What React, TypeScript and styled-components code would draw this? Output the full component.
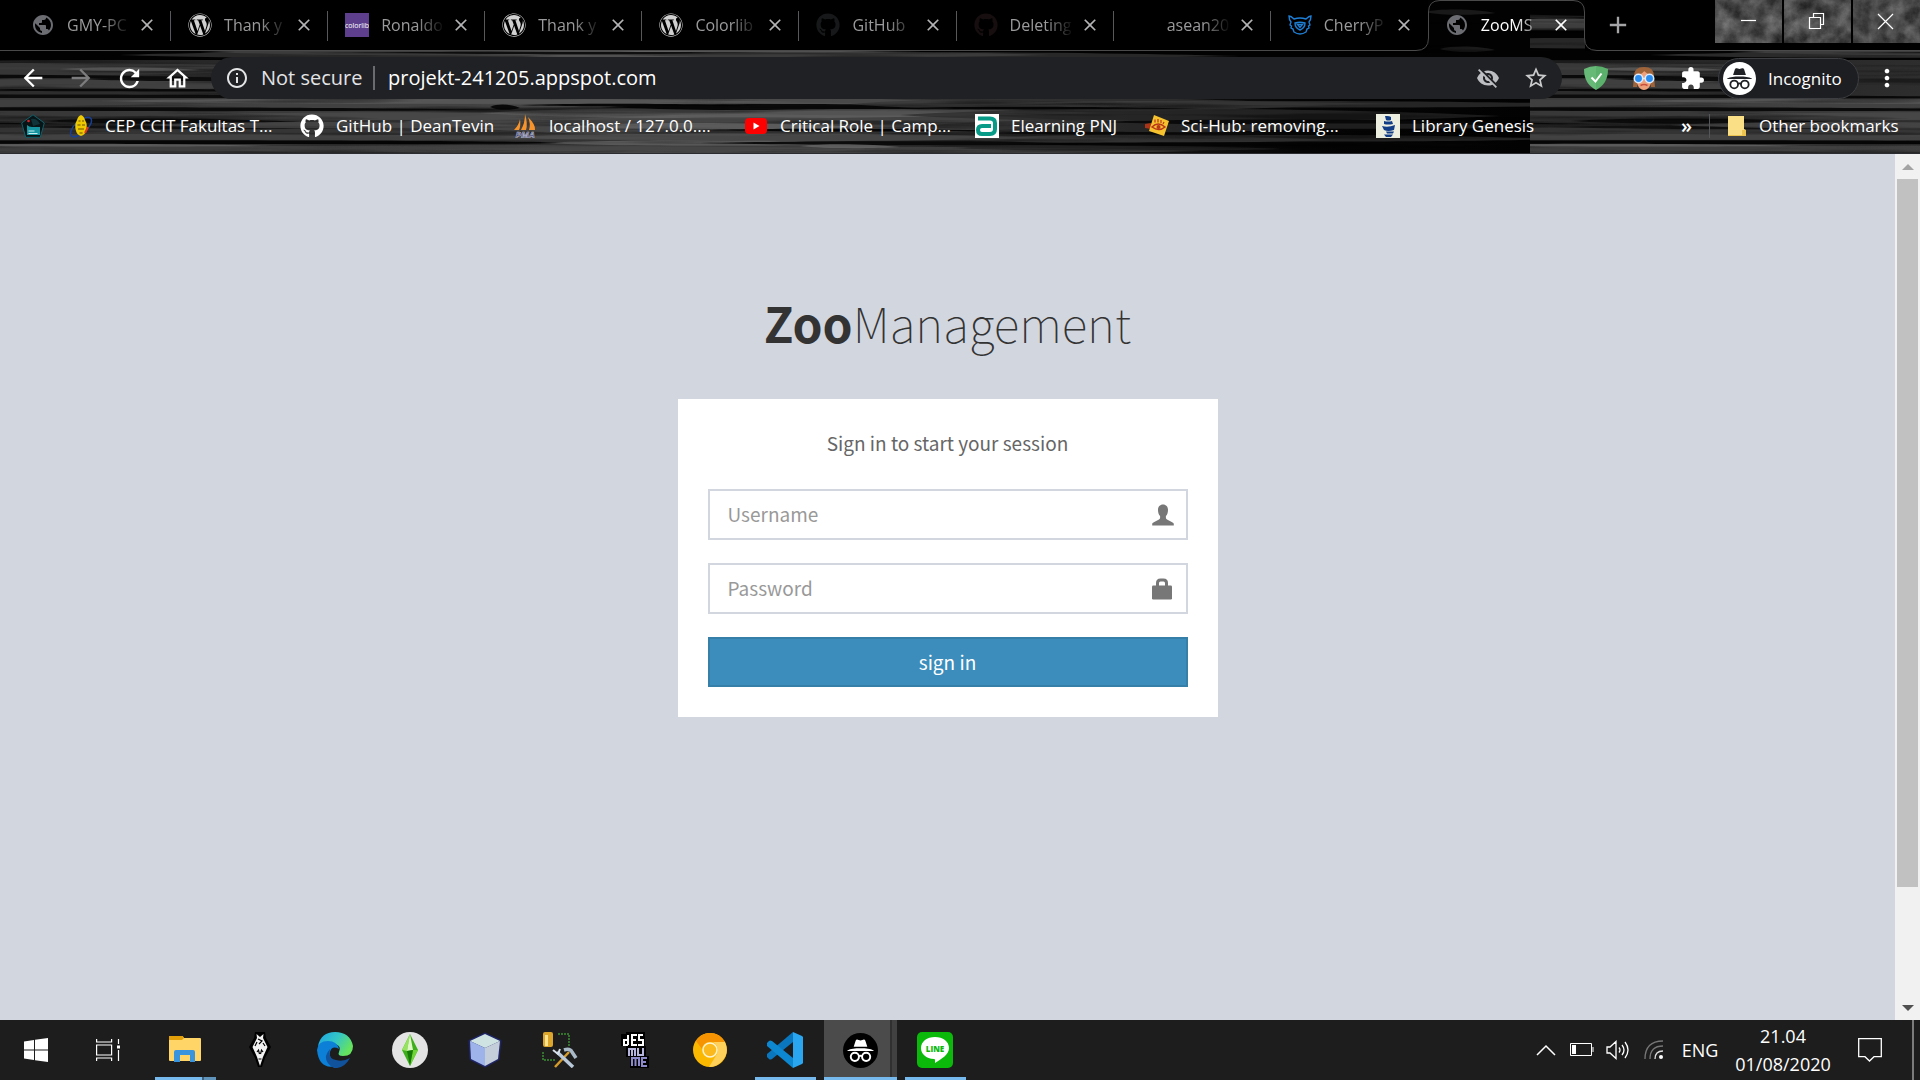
import React from "react";
import styled, { createGlobalStyle } from "styled-components";
import {
  MdArrowBack,
  MdArrowForward,
  MdRefresh,
  MdOutlineHome,
  MdInfoOutline,
  MdStarBorder,
  MdExtension,
  MdMoreVert,
  MdPublic,
  MdVisibilityOff,
  MdClose,
  MdAdd,
} from "react-icons/md";
import { FaWordpress, FaGithub } from "react-icons/fa";

const GlobalStyle = createGlobalStyle`
  *, *::before, *::after { box-sizing: border-box; }
  body { margin: 0; background: #000; font-family: "Open Sans", "Noto Sans", sans-serif; }
  button, input { font: inherit; color: inherit; }
  svg { display: block; flex: none; }
`;

/* ---------- shell ---------- */

const Screen = styled.div`
  display: flex;
  flex-direction: column;
  height: 100vh;
  overflow: hidden;
`;

const Chrome = styled.header`
  position: relative;
  isolation: isolate;
  flex: none;
  background: #000;
  border-bottom: 1px solid #2b2c2f;
`;

const TextureSvg = styled.svg`
  position: absolute;
  inset: 0;
  width: 100%;
  height: 100%;
  z-index: -1;
`;

/* ---------- tab strip ---------- */

const Strip = styled.div`
  display: flex;
  height: 51px;
`;

const TabList = styled.div`
  display: flex;
  flex: 1;
  min-width: 0;
`;

const StripEdge = styled.div`
  flex: none;
  width: 14px;
  background: #000;
  border-bottom: 1px solid #4a4a4a;
`;

const TabItem = styled.div<{ $active?: boolean; $divider?: boolean }>`
  position: relative;
  display: flex;
  align-items: center;
  flex: 1 1 0;
  min-width: 0;
  padding: 0 14px 0 17px;
  background: ${(p) => (p.$active ? "transparent" : "#000")};
  border-bottom: 1px solid ${(p) => (p.$active ? "transparent" : "#4a4a4a")};
  color: ${(p) => (p.$active ? "#fff" : "#9a9a9c")};
  z-index: ${(p) => (p.$active ? 1 : 0)};

  &::after {
    content: "";
    display: ${(p) => (p.$divider ? "block" : "none")};
    position: absolute;
    right: 0;
    top: 11px;
    width: 1px;
    height: 30px;
    background: #58585a;
  }
`;

const TabOutline = styled.svg`
  position: absolute;
  left: -12px;
  top: 0;
`;

const TabButton = styled.button`
  position: relative;
  display: flex;
  align-items: center;
  gap: 12px;
  flex: 1;
  min-width: 0;
  height: 40px;
  padding: 0;
  border: 0;
  background: none;
  text-align: left;
`;

const TabTitle = styled.span`
  flex: 0 0 66px;
  overflow: hidden;
  font-size: 16px;
  line-height: 24px;
  white-space: nowrap;
  mask-image: linear-gradient(90deg, #000 36px, transparent 64px);
`;

const IconButton = styled.button<{ $size?: number; $tone?: string }>`
  position: relative;
  display: grid;
  place-items: center;
  flex: none;
  width: ${(p) => p.$size ?? 48}px;
  height: ${(p) => p.$size ?? 48}px;
  padding: 0;
  border: 0;
  background: none;
  color: ${(p) => p.$tone ?? "#fff"};
`;

const StripEnd = styled.div`
  display: flex;
  justify-content: space-between;
  align-items: flex-start;
  flex: none;
  width: 335px;
  padding-left: 16px;
  background: #000;
  border-bottom: 1px solid #4a4a4a;
`;

const NewTab = styled.div`
  display: flex;
  align-items: center;
  height: 50px;
`;

const WindowControls = styled.div`
  display: flex;
  gap: 2px;
`;

const WindowButton = styled.button`
  position: relative;
  width: 67px;
  height: 43px;
  padding: 0;
  border: 0;
  background: #3c3c3c;
`;

/* ---------- toolbar ---------- */

const Toolbar = styled.div`
  display: flex;
  align-items: center;
  height: 54px;
  padding: 0 9px;
`;

const Omnibox = styled.div`
  display: flex;
  align-items: center;
  flex: 1;
  min-width: 0;
  height: 42px;
  margin: 0 10px;
  padding: 0 2px 0 14px;
  border-radius: 21px;
  background: #202124;
`;

const SiteInfo = styled.button`
  display: flex;
  align-items: center;
  gap: 12px;
  flex: none;
  width: 150px;
  padding: 0;
  border: 0;
  border-right: 2px solid #6a6b6e;
  background: none;
  color: #e3e4e6;
  font-size: 20px;
  line-height: 24px;
  white-space: nowrap;
`;

const UrlInput = styled.input`
  flex: 1;
  min-width: 0;
  padding: 0 0 0 13px;
  border: 0;
  outline: 0;
  background: none;
  color: #fff;
  font-size: 20px;
  line-height: 28px;
`;

const ProfileChip = styled.button`
  display: flex;
  align-items: center;
  gap: 12px;
  flex: none;
  width: 141px;
  height: 41px;
  margin: 0 4px 0 2px;
  padding: 0 0 0 4px;
  border: 1px solid #3d3e41;
  border-radius: 21px;
  background: #1d1e21;
  color: #fff;
  font-size: 17px;
`;

/* ---------- bookmarks ---------- */

const Bookmarks = styled.nav`
  display: flex;
  align-items: center;
  gap: 24px;
  height: 48px;
  padding: 0 21px;
  padding-bottom: 6px;
`;

const BookmarkLink = styled.a<{ $label?: number }>`
  display: flex;
  align-items: center;
  gap: 12px;
  flex: none;
  color: #fff;
  font-size: 17px;
  line-height: 24px;
  text-decoration: none;
  white-space: nowrap;

  span {
    width: ${(p) => (p.$label ? `${p.$label}px` : "auto")};
  }
`;

const BookmarkEnd = styled.div`
  display: flex;
  align-items: center;
  margin-left: auto;
  gap: 17px;
`;

const More = styled.button`
  padding: 0;
  border: 0;
  background: none;
  color: #fff;
  font-size: 20px;
  font-weight: 600;
  line-height: 24px;
`;

const Rule = styled.i`
  width: 1px;
  height: 24px;
  background: #55565a;
`;

/* ---------- page ---------- */

const Viewport = styled.div`
  display: flex;
  flex: 1;
  min-height: 0;
`;

const Page = styled.main`
  flex: 1;
  min-width: 0;
  padding-top: 132px;
  background: #d2d6de;
  font-family: "Noto Sans CJK SC", "Open Sans", sans-serif;
`;

const LoginBox = styled.section`
  width: 540px;
  margin: 0 auto;
`;

const Logo = styled.h1`
  margin: 0 0 41px;
  color: #333;
  font-size: 48px;
  font-weight: 100;
  line-height: 72px;
  text-align: center;
  white-space: nowrap;

  b { font-weight: 700; }
`;

const Card = styled.form`
  display: flex;
  flex-direction: column;
  padding: 30px;
  background: #fff;
  color: #666;
  font-size: 19px;
`;

const Message = styled.p`
  margin: 0 0 32px;
  line-height: 28px;
  text-align: center;
`;

const Field = styled.label`
  display: flex;
  align-items: center;
  height: 51px;
  margin-bottom: 23px;
  padding: 0 12px 0 18px;
  border: 2px solid #d2d6de;
  color: #777;
`;

const FieldInput = styled.input`
  flex: 1;
  min-width: 0;
  padding: 0 0 2px;
  border: 0;
  outline: 0;
  background: none;
  color: #555;
  line-height: 28px;

  &::placeholder { color: #999; opacity: 1; }
`;

const Submit = styled.button`
  height: 50px;
  padding: 0 0 2px;
  border: 2px solid #367fa9;
  background: #3c8dbc;
  color: #fff;
`;

const ScrollTrack = styled.div`
  display: flex;
  flex-direction: column;
  align-items: center;
  flex: none;
  width: 25px;
  background: #f1f1f1;
`;

const ScrollArrow = styled.button<{ $down?: boolean }>`
  display: grid;
  place-items: center;
  width: 25px;
  height: 25px;
  padding: 0;
  border: 0;
  background: none;

  &::before {
    content: "";
    border: 6px solid transparent;
    border-top: ${(p) => (p.$down ? "6px solid #505050" : "0")};
    border-bottom: ${(p) => (p.$down ? "0" : "6px solid #a3a3a3")};
  }
`;

const ScrollRail = styled.div`
  flex: 1;
  width: 21px;
`;

const ScrollThumb = styled.div`
  height: calc(87% - 2px);
  background: #c1c1c1;
`;

/* ---------- taskbar ---------- */

const Taskbar = styled.footer`
  display: flex;
  flex: none;
  height: 60px;
  background: #1d1d1d;
  color: #fff;
`;

const SystemButton = styled.button`
  display: grid;
  place-items: center;
  width: 72px;
  padding: 0;
  border: 0;
  background: none;
`;

const Apps = styled.div`
  display: flex;
  gap: 14px;
  margin-left: 11px;
`;

const AppButton = styled.button<{ $open?: boolean; $active?: boolean; $stacked?: boolean }>`
  position: relative;
  display: grid;
  place-items: center;
  width: ${(p) => (p.$active ? 73 : 61)}px;
  margin: ${(p) => (p.$active ? "0 -6px" : "0")};
  padding: 0 1px 0 0;
  border: 0;
  background: ${(p) =>
    p.$active ? "linear-gradient(90deg, #4b4b4b 66px, #303030 66px, #303030 68px, #414141 68px)" : "none"};

  &::before {
    content: "";
    display: ${(p) => (p.$open ? "block" : "none")};
    position: absolute;
    left: 0;
    right: 0;
    bottom: 0;
    height: 3px;
    background: ${(p) =>
      p.$stacked
        ? "linear-gradient(90deg, #76b9ed calc(100% - 14px), #3f617c calc(100% - 14px), #3f617c calc(100% - 12px), #6094bb calc(100% - 12px))"
        : "#76b9ed"};
  }
`;

const Tray = styled.div`
  display: flex;
  align-items: center;
  margin-left: auto;
  font-size: 18px;
  line-height: 28px;
`;

const TrayButton = styled.button<{ $w: number }>`
  display: grid;
  place-items: center;
  flex: none;
  width: ${(p) => p.$w}px;
  height: 60px;
  padding: 0;
  border: 0;
  background: none;
  line-height: 28px;
  text-align: center;
`;

const Clock = styled.button`
  width: 110px;
  height: 60px;
  padding: 2px 0;
  border: 0;
  background: none;
  line-height: 28px;

  time { display: block; }
`;

const ShowDesktop = styled.button`
  width: 8px;
  height: 60px;
  margin-left: 10px;
  padding: 0;
  border: 0;
  border-left: 2px solid #7b7b7b;
  background: none;
`;

/* ---------- theme texture ---------- */

// [x start, x end, y, half thickness, grey level]
const streaks: number[][] = [
  [-200, 90, 16, 3, 40], [-120, 200, 23, 7, 88], [-120, 200, 27, 5, 60], [-100, 200, 43, 8, 50],
  [1425, 1495, 12, 4, 26], [1440, 1495, 49, 4, 28],
  [-400, 300, 55, 8, 2],
  [200, 760, 52, 5, 80], [420, 1050, 54, 6, 105], [300, 900, 53, 2, 10], [620, 1240, 55, 5, 52], [120, 560, 55, 4, 55],
  [-300, 320, 66, 5, 62], [-100, 230, 71, 6, 60], [60, 200, 69, 3, 90], [-300, 240, 77, 4, 8], [-200, 330, 84, 9, 72],
  [80, 300, 79, 3, 12], [-150, 260, 91, 6, 48], [-60, 330, 90, 2, 8], [-300, 500, 97, 4, 10],
  [-500, 900, 103, 8, 72], [100, 800, 101, 4, 92], [400, 1100, 102, 6, 84],
  [-400, 700, 115, 8, 62], [-200, 520, 109, 3, 8], [-100, 420, 119, 4, 50], [150, 760, 116, 6, 74],
  [400, 1100, 122, 20, 74], [480, 1000, 113, 8, 98], [640, 900, 119, 3, 66], [600, 1040, 107, 5, 6], [520, 760, 105, 2, 4], [490, 520, 107, 4, 6],
  [700, 1100, 112, 5, 80], [560, 860, 126, 5, 98], [700, 1010, 130, 2, 6],
  [-300, 60, 123, 2, 6], [40, 300, 121, 4, 12], [-200, 500, 133, 9, 56], [20, 420, 127, 3, 16], [140, 540, 125, 5, 74],
  [-400, 700, 137, 5, 70], [-200, 650, 142, 3, 4], [-300, 900, 149, 8, 70], [-60, 270, 145, 2, 100],
  [500, 1050, 137, 6, 78], [540, 900, 143, 4, 100], [700, 1200, 143, 3, 8], [420, 1200, 150, 6, 70], [800, 900, 146, 3, 105],
  [850, 1330, 104, 10, 54], [900, 1200, 108, 2, 4], [1000, 1400, 103, 3, 70], [900, 1500, 115, 10, 42], [1050, 1620, 104, 5, 48],
  [920, 1330, 126, 10, 44], [1100, 1500, 122, 4, 8], [1180, 1560, 126, 4, 38], [950, 1330, 139, 6, 58], [1100, 1560, 138, 5, 44],
  [950, 1280, 148, 4, 36], [1000, 1500, 144, 3, 4], [980, 1250, 133, 2, 8],
];

const Texture = () => (
  <TextureSvg aria-hidden="true">
    <defs>
      <linearGradient id="shade">
        <stop offset="0" stopColor="#222" />
        <stop offset="0.400" stopColor="#343434" />
        <stop offset="0.650" stopColor="#222" />
        <stop offset="0.850" stopColor="#050505" />
        <stop offset="1" stopColor="#020202" />
      </linearGradient>
      <filter id="grain" x="0" y="0" width="100%" height="100%">
        <feTurbulence type="fractalNoise" baseFrequency="0.004 0.14" numOctaves="3" seed="8" />
        <feColorMatrix values="0 0 0 0 0  0 0 0 0 0  0 0 0 0 0  4 0 0 0 -2" />
      </filter>
      <pattern id="wood" width="1530" height="160" patternUnits="userSpaceOnUse">
        <rect width="1530" height="160" fill="#020202" />
        <rect y="60" width="1530" height="100" fill="url(#shade)" />
        {streaks.map(([a, b, y, h, g], i) => {
          const third = (b - a) / 4;
          return (
            <path
              key={i}
              fill={`rgb(${g},${g},${g})`}
              fillOpacity={g < 30 ? 0.95 : 0.75}
              d={`M${a} ${y}C${a + third} ${y - h} ${b - third} ${y - h * 0.7} ${b} ${y + 1}C${b - third} ${y + h * 0.8} ${a + third} ${y + h} ${a} ${y}z`}
            />
          );
        })}
        <rect width="1530" height="160" filter="url(#grain)" opacity="0.4" />
      </pattern>
    </defs>
    <rect width="100%" height="100%" fill="url(#wood)" />
  </TextureSvg>
);

const ButtonGrain = ({ seed, children }: { seed: number; children: React.ReactNode }) => (
  <svg width="67" height="43" aria-hidden="true">
    <filter id={`stone${seed}`} x="0" y="0" width="100%" height="100%" colorInterpolationFilters="sRGB">
      <feTurbulence type="fractalNoise" baseFrequency="0.06" numOctaves="6" seed={seed} />
      <feColorMatrix values="0.45 0 0 0 0.06  0.45 0 0 0 0.06  0.45 0 0 0 0.06  0 0 0 0 1" />
    </filter>
    <rect width="67" height="43" filter={`url(#stone${seed})`} />
    <g fill="none" stroke="#fff" strokeWidth="1.2">{children}</g>
  </svg>
);

/* ---------- drawn icons ---------- */

const IncognitoGlyph = ({ size, disc, ink }: { size: number; disc: string; ink: string }) => (
  <svg width={size} height={size} viewBox="0 0 36 36" aria-hidden="true">
    <circle cx="18" cy="18" r="18" fill={disc} />
    <path fill={ink} d="M13 8c.4-1.200 1.200-1.500 2.200-1.100l2.800.8 2.800-.8c1-.4 1.800-.1 2.200 1.100l2 6.200H11zM4.500 18.600v-.7C8 16.200 12 15.700 18 15.700s10 .5 13.500 2.200v.7z" />
    <g fill="none" stroke={ink} strokeWidth="2">
      <circle cx="12.200" cy="24.500" r="4.200" />
      <circle cx="23.800" cy="24.500" r="4.200" />
      <path d="M16.300 24q1.700-1.300 3.400 0" />
    </g>
  </svg>
);

const Wp = () => <FaWordpress size={24} color="#d0d0d0" />;
const Globe = () => <MdPublic size={24} color="#6b6d72" />;

const Colorlib = () => (
  <svg width="24" height="24" aria-hidden="true">
    <rect width="24" height="24" fill="#5e3f8e" />
    <text x="12" y="15" textAnchor="middle" fontSize="7" fontFamily="Open Sans, sans-serif" fill="#fff">colorlib</text>
  </svg>
);

const YouTube = () => (
  <svg width="24" height="24" viewBox="0 0 24 24" aria-hidden="true">
    <rect x="1" y="4" width="22" height="16" rx="4" fill="#f00" />
    <path d="M9.500 8.500v7l6-3.500z" fill="#fff" />
  </svg>
);

const Cherry = () => (
  <svg width="24" height="24" viewBox="0 0 24 24" fill="none" stroke="#1d7fd6" strokeWidth="1.400" aria-hidden="true">
    <path d="M1 3q2 0 5 3 6-2 12 0 3-3 5-3 0 4-2 6l1 3-1.500 1 .5 2-2 1-1 3q-6 4-12 0l-1-3-2-1 .5-2L2 12l1-3Q1 7 1 3z" />
    <path d="M7 10q5-1.500 10 0 0 5-5 7-5-2-5-7zM9.500 11.500h5L12 14.500z" />
  </svg>
);

const Blank = styled.i`
  width: 24px;
  height: 24px;
`;

const Pentagon = () => (
  <svg width="24" height="24" viewBox="0 0 24 24" aria-hidden="true">
    <path d="M12 .8L23.300 9l-4 14.300H4.700L.7 9z" fill="#081416" stroke="#12606a" />
    <path d="M6 11q2 2 5 2h8v8H6z" fill="#1795a0" />
    <path d="M10 5q6-1 9 5l-7 2z" fill="#0f3338" />
    <circle cx="7.500" cy="7" r="1.300" fill="#d8222b" />
    <path d="M7.500 17h6M7.500 19.500h9" stroke="#c7eef0" />
  </svg>
);

const Ccit = () => (
  <svg width="24" height="24" viewBox="0 0 24 24" aria-hidden="true">
    <ellipse cx="12" cy="13" rx="13" ry="6" fill="none" stroke="#173f96" strokeWidth="1.500" transform="rotate(-42 12 13)" />
    <path d="M12 1q3 1 4 5 3 5 1 11-1 4-5 5-4-1-5-5-2-6 1-11 1-4 4-5z" fill="#ecc900" />
    <path d="M9.500 7h2M13 7h2M8.500 11h3M13 11h3M9 15h6M10.500 19h3" stroke="#6a4d00" strokeWidth="1.200" />
    <path d="M19 13l-3 6" stroke="#e0381c" strokeWidth="2" />
  </svg>
);

const Pma = () => (
  <svg width="24" height="24" viewBox="0 0 24 24" aria-hidden="true">
    <path d="M7 5q1 7-1 11H1q5-5 6-11zM12 0q3 10 1 16H8q4-7 4-16zM15 3q8 8 7 13h-6q2-6-1-13z" fill="#f6932a" />
    <text x="12" y="24" textAnchor="middle" fontSize="9" fontWeight="700" fontStyle="italic" fontFamily="Open Sans, sans-serif" fill="#3b3d74" stroke="#c9c9d8" strokeWidth="0.500">PMA</text>
  </svg>
);

const Elearning = () => (
  <svg width="24" height="24" viewBox="0 0 24 24" aria-hidden="true">
    <rect width="24" height="24" fill="#fff" />
    <path d="M3 4.500h12q5 0 5 4.500v6q0 5-5 5H7q-4 0-4-4t4-4h9" fill="none" stroke="#079a87" strokeWidth="4" />
  </svg>
);

const SciHub = () => (
  <svg width="24" height="24" viewBox="0 0 24 24" aria-hidden="true">
    <path d="M0 10l6-1v6l-6-1z" fill="#a9341a" />
    <path d="M9 1l15 6-5 15-15-5z" fill="#f6c22d" />
    <path d="M7 13q6-6 13 0-6 5-13 0z" fill="none" stroke="#b8361b" strokeWidth="1.500" />
    <circle cx="13.500" cy="13" r="2" fill="#b8361b" />
    <path d="M10 5.500v3M13 5v3.500M16 6v3M19 8l-1 2" stroke="#b8361b" strokeWidth="1.200" />
  </svg>
);

const LibGen = () => (
  <svg width="24" height="24" viewBox="0 0 24 24" aria-hidden="true">
    <rect width="24" height="24" fill="#eceee0" />
    <path d="M9 2q4-.5 6 1v3q-3 1-5 0zM8 7q4 1 8 0l1 3q-5 1-9 0zM6 12q6 2 13-1l-1 5q-6 2-10 0zM10 17.500h8l-1 2h-6zM8 20.500h9l-2 2.500H10z" fill="#113c86" />
  </svg>
);

const FolderGlyph = () => (
  <svg width="20" height="24" viewBox="0 0 20 24" aria-hidden="true">
    <path d="M1 2h16v13l2 1v6H1z" fill="#fbdf87" />
    <path d="M1 21h14v-5h4v6H1z" fill="#eec450" />
  </svg>
);

const Shield = () => (
  <svg width="24" height="24" viewBox="0 0 24 24" aria-hidden="true">
    <path d="M12 0q6 0 12 3 0 15-12 21z" fill="#5bb06c" />
    <path d="M12 0Q6 0 0 3q0 15 12 21z" fill="#67b978" />
    <path d="M7.500 11.500l4 4 6-8" fill="none" stroke="#fff" strokeWidth="2" />
  </svg>
);

const Goggles = () => (
  <svg width="24" height="24" viewBox="0 0 24 24" aria-hidden="true">
    <path d="M2 10Q2 1 12 1t10 9l1 11h-4L17 8H7L5 21H1z" fill="#a0643a" />
    <path d="M5 9q4 0 7-4 3 3 7 4v8q-2 7-7 7t-7-7z" fill="#eda07a" />
    <path d="M4 9q5 0 9-5l-5-2-5 4z" fill="#a0643a" />
    <path d="M8.500 19.500q3.500-2 7 0" fill="none" stroke="#c84f3c" strokeWidth="1.500" />
    <g fill="#2b8cf0" stroke="#dcecff" strokeWidth="1.500">
      <circle cx="6.500" cy="12.500" r="4.200" />
      <circle cx="17.500" cy="12.500" r="4.200" />
    </g>
    <path d="M10.500 12.500h3" stroke="#dcecff" strokeWidth="1.500" />
  </svg>
);

const UserGlyph = () => (
  <svg width="22" height="22" viewBox="0 0 22 21" fill="currentColor" aria-hidden="true">
    <path d="M11 0c3.200 0 5 2.300 5 5.600 0 2.600-.7 4.700-2.100 6v1.700c0 .8.4 1.200 1.100 1.600l5.200 2.800c1 .5 1.600 1 1.600 2V21H.2v-1.300c0-1 .6-1.500 1.600-2L7 14.900c.7-.4 1.100-.8 1.100-1.600v-1.700C6.700 10.300 6 8.200 6 5.600 6 2.300 7.800 0 11 0z" />
  </svg>
);

const LockGlyph = () => (
  <svg width="22" height="22" viewBox="0 0 22 21" aria-hidden="true">
    <rect x="0" y="7" width="20" height="14" rx="1.200" fill="currentColor" />
    <path d="M5.500 8V4.500q0-3 3-3h3q3 0 3 3V8" fill="none" stroke="currentColor" strokeWidth="3" />
  </svg>
);

const WindowsLogo = () => (
  <svg width="24" height="24" viewBox="0 0 24 24" fill="#fff" aria-hidden="true">
    <path d="M0 3.400L10 2v9.500H0zM11 1.800L24 0v11.500H11zM0 12.500h10V22L0 20.600zM11 12.500h13V24l-13-1.800z" />
  </svg>
);

const TaskView = () => (
  <svg width="24" height="24" viewBox="0 0 24 24" fill="none" stroke="#fff" strokeWidth="1.200" aria-hidden="true">
    <path d="M.6 1v3h15V1M.6 7h15v10H.6zM.6 23v-3h15v3M22.500 1v5M22.500 12v11" />
    <rect x="21" y="7.500" width="3" height="3" fill="#fff" stroke="none" />
  </svg>
);

const Explorer = () => (
  <svg width="32" height="28" viewBox="0 0 32 28" aria-hidden="true">
    <path d="M0 1q0-1 1-1h12q1 0 2 2h16q1 0 1 1v21q0 1-1 1H1q-1 0-1-1z" fill="#ffd567" />
    <path d="M0 1q0-1 1-1h12q1 0 2 2l-2 2H0z" fill="#e3a008" />
    <path d="M5 26V16q0-2 2-2h17q2 0 2 2v10h-5v-7H11v7z" fill="#3a93dd" />
  </svg>
);

const Skyrim = () => (
  <svg width="22" height="36" viewBox="0 0 22 36" aria-hidden="true">
    <path d="M6 0h10l1 6 5 9-6 11-3 9h-4l-3-9L0 15l5-9z" fill="#000" />
    <path d="M7.500 2L8 6l-4.500 9L8 25l3 9 3-9 4.500-10L14 6l.5-4-3.500 3z" fill="#f2f2f2" />
    <path d="M9 7l4 2-3 3M8 10l-2 4M14 11l2 3M8 20l1.500-2 1 4M14 20l-1.500-2-1 4M9.500 27h3" fill="none" stroke="#000" strokeWidth="1.200" />
  </svg>
);

const Edge = () => (
  <svg width="36" height="36" viewBox="0 0 36 36" aria-hidden="true">
    <defs>
      <linearGradient id="edgeTop" x1="0" x2="1" y1="0" y2="0.500">
        <stop offset="0" stopColor="#1aa3e6" />
        <stop offset="0.550" stopColor="#35c6c4" />
        <stop offset="1" stopColor="#66e35e" />
      </linearGradient>
    </defs>
    <path d="M1 14Q4 0 18 0q15 0 18 14 0 10-10 10-6 0-4-4 3-6-4-8Q8 9 1 14z" fill="url(#edgeTop)" />
    <path d="M0 18q1-9 11-9 9 0 11 8-7-4-9 3-1 8 6 14Q2 38 0 18z" fill="#0c7fd6" />
    <path d="M13 17q-2 10 6 11 7 2 14-2-6 11-16 10-9-5-8-12 1-4 4-7z" fill="#11529d" />
  </svg>
);

const Sims = () => (
  <svg width="36" height="36" viewBox="0 0 36 36" aria-hidden="true">
    <circle cx="18" cy="18" r="18" fill="#e4e4e4" />
    <path d="M18 2l-8 16 8 16 8-16z" fill="#3fae1c" />
    <path d="M18 2l-3 17-5-1z" fill="#96e35d" />
    <path d="M18 2l3 16-6 1z" fill="#dff7c6" />
    <path d="M18 34l3-16 5 0z" fill="#71d436" />
    <path d="M18 34l-3-15 6-1z" fill="#177a08" />
  </svg>
);

const Cube = () => (
  <svg width="34" height="36" viewBox="0 0 34 36" aria-hidden="true">
    <path d="M17 2l15 7-2 18-13 7L3 27 2 9z" fill="#1f2566" stroke="#1f2566" strokeWidth="3" strokeLinejoin="round" />
    <path d="M17 2l15 7-15 7L2 9z" fill="#cfe3e2" />
    <path d="M2 9l15 7v18L3 27z" fill="#9db3ea" />
    <path d="M32 9l-15 7v18l13-7z" fill="#c3ceda" />
  </svg>
);

const DbTools = () => (
  <svg width="36" height="36" viewBox="0 0 36 36" fill="none" aria-hidden="true">
    <path d="M16 2h11v12M1 20v8h12" stroke="#3c8d36" strokeWidth="1.500" strokeDasharray="2 1" />
    <rect x="1" y="0" width="10" height="15" rx="2" fill="#dca52b" />
    <rect x="3" y="3" width="3" height="11" fill="#ffe28c" />
    <path d="M13 35l14-15" stroke="#d59b2b" strokeWidth="2.500" />
    <path d="M22 18q6-2 8 2l4 6" stroke="#a9b9c8" strokeWidth="3.500" />
    <path d="M15 20l16 15" stroke="#b9c9da" strokeWidth="3.500" />
    <path d="M11 18l5 4 2-5" stroke="#d5e0ea" strokeWidth="2" />
  </svg>
);

const Desmume = () => (
  <svg width="28" height="36" viewBox="0 0 28 36" aria-hidden="true">
    <path d="M0 2h5V0h19v14h1v10h3v12H9V25H5V14H0z" fill="#000" />
    <g fill="none" strokeWidth="2">
      <path stroke="#fff" d="M7 3v10M7 8H3v5h4M16 3h-5v10h5M11 8h4M22 3h-4v5h4v5h-5" />
      <path stroke="#b5b4dc" d="M8 24v-7h6v7M11 17v7M17 16v7h5v-7" />
      <path stroke="#8b89c9" d="M11 34v-8h7v8M14.500 26v8M26 26h-5v8h5M21 30h4" />
    </g>
  </svg>
);

const Canary = () => (
  <svg width="34" height="34" viewBox="0 0 34 34" aria-hidden="true">
    <circle cx="17" cy="17" r="17" fill="#fbb800" />
    <path d="M3 8Q8 0 17 0q10 0 15 9H17q-7 0-8 7z" fill="#f59303" />
    <path d="M32 9q5 12-4 20-5 5-12 5l8-13q3-7-4-12z" fill="#ffd05a" />
    <circle cx="17" cy="17" r="7" fill="#fbb91e" stroke="#fff3d0" strokeWidth="1.500" />
  </svg>
);

const VsCode = () => (
  <svg width="36" height="36" viewBox="0 0 36 36" aria-hidden="true">
    <path d="M26 0v10L5 27q-2 1-3 0l-2-2q-1-1 0-3z" fill="#0a76bd" />
    <path d="M26 36V26L5 9Q3 8 2 9l-2 2q-1 1 0 3z" fill="#0d87cf" />
    <path d="M26 0l9 4 1 1v26l-1 1-9 4z" fill="#2aa5ef" />
  </svg>
);

const Line = () => (
  <svg width="36" height="36" viewBox="0 0 36 36" aria-hidden="true">
    <rect width="36" height="36" rx="5" fill="#0ab90a" />
    <path d="M18 5c8 0 14 4.500 14 11 0 7-8 11-14 15 0-2 .5-4-1-4C9 26.500 4 22 4 16 4 9.500 10 5 18 5z" fill="#fff" />
    <text x="18" y="19.500" textAnchor="middle" fontSize="8" fontWeight="800" fontFamily="Open Sans, sans-serif" fill="#0ab90a">LINE</text>
  </svg>
);

/* ---------- data ---------- */

const tabs = [
  { title: "GMY-PC", icon: <Globe /> },
  { title: "Thank y", icon: <Wp /> },
  { title: "Ronaldo", icon: <Colorlib /> },
  { title: "Thank y", icon: <Wp /> },
  { title: "Colorlib", icon: <Wp /> },
  { title: "GitHub", icon: <FaGithub size={24} color="#17181a" /> },
  { title: "Deleting", icon: <FaGithub size={24} color="#170e0f" /> },
  { title: "asean20", icon: <Blank /> },
  { title: "CherryP", icon: <Cherry /> },
  { title: "ZooMS", icon: <Globe />, active: true },
];

const bookmarks = [
  { label: "CEP CCIT Fakultas T...", width: 171, icon: <Ccit /> },
  { label: "GitHub | DeanTevin", width: 153, icon: <FaGithub size={24} /> },
  { label: "localhost / 127.0.0....", width: 171, icon: <Pma /> },
  { label: "Critical Role | Camp...", width: 171, icon: <YouTube /> },
  { label: "Elearning PNJ", width: 110, icon: <Elearning /> },
  { label: "Sci-Hub: removing...", width: 171, icon: <SciHub /> },
  { label: "Library Genesis", width: 120, icon: <LibGen /> },
];

const apps = [
  { name: "File Explorer", icon: <Explorer />, open: true, stacked: true },
  { name: "Skyrim", icon: <Skyrim /> },
  { name: "Edge", icon: <Edge /> },
  { name: "The Sims", icon: <Sims /> },
  { name: "VirtualBox", icon: <Cube /> },
  { name: "Database tools", icon: <DbTools /> },
  { name: "DeSmuME", icon: <Desmume /> },
  { name: "Chrome Canary", icon: <Canary /> },
  { name: "Visual Studio Code", icon: <VsCode />, open: true },
  { name: "Incognito window", icon: <IncognitoGlyph size={35} disc="#000" ink="#fff" />, open: true, active: true },
  { name: "LINE", icon: <Line />, open: true },
];

/* ---------- app ---------- */

export default function App() {
  return (
    <Screen>
      <GlobalStyle />
      <Chrome>
        <Texture />
        <Strip>
          <StripEdge />
          <TabList>
            {tabs.map((tab, i) => (
              <TabItem key={i} $active={tab.active} $divider={i < tabs.length - 2}>
                {tab.active && (
                  <TabOutline width="181" height="51" viewBox="0 0 181 51" aria-hidden="true">
                    <path d="M0 51V50Q12 50 12 38V51zM181 51V50Q169 50 169 38V51z" fill="#000" />
                    <path d="M0 50.500Q12.500 50.500 12.500 38V12Q12.500.5 24 .5H157Q168.500.5 168.500 12V38Q168.500 50.500 181 50.500" fill="none" stroke="#4a4a4a" />
                  </TabOutline>
                )}
                <TabButton>
                  {tab.icon}
                  <TabTitle>{tab.title}</TabTitle>
                </TabButton>
                <IconButton $size={20} $tone={tab.active ? "#fff" : "#b4b4b6"} aria-label="Close tab">
                  <MdClose size={20} />
                </IconButton>
              </TabItem>
            ))}
          </TabList>
          <StripEnd>
            <NewTab>
              <IconButton $size={34} $tone="#a5a5a7" aria-label="New tab">
                <MdAdd size={28} />
              </IconButton>
            </NewTab>
            <WindowControls>
              <WindowButton aria-label="Minimize">
                <ButtonGrain seed={3}><path d="M26 20.500h15" /></ButtonGrain>
              </WindowButton>
              <WindowButton aria-label="Restore">
                <ButtonGrain seed={11}><path d="M25.500 17.500h11v11h-11zM29.500 17v-3.500h10v11h-3" /></ButtonGrain>
              </WindowButton>
              <WindowButton aria-label="Close">
                <ButtonGrain seed={19}><path d="M25 14l15 15M40 14l-15 15" /></ButtonGrain>
              </WindowButton>
            </WindowControls>
          </StripEnd>
        </Strip>

        <Toolbar>
          <IconButton aria-label="Back"><MdArrowBack size={28} /></IconButton>
          <IconButton $tone="#7c7c7e" aria-label="Forward"><MdArrowForward size={28} /></IconButton>
          <IconButton aria-label="Reload"><MdRefresh size={29} /></IconButton>
          <IconButton aria-label="Home"><MdOutlineHome size={27} /></IconButton>
          <Omnibox>
            <SiteInfo>
              <MdInfoOutline size={24} />
              Not secure
            </SiteInfo>
            <UrlInput aria-label="Address" defaultValue="projekt-241205.appspot.com" />
            <IconButton $tone="#bdbec1" aria-label="Cookies blocked"><MdVisibilityOff size={24} /></IconButton>
            <IconButton $tone="#c9cacc" aria-label="Bookmark this page"><MdStarBorder size={26} /></IconButton>
          </Omnibox>
          <IconButton aria-label="Ad blocker"><Shield /></IconButton>
          <IconButton aria-label="Extension"><Goggles /></IconButton>
          <IconButton aria-label="Extensions"><MdExtension size={25} /></IconButton>
          <ProfileChip>
            <IncognitoGlyph size={33} disc="#fff" ink="#202124" />
            Incognito
          </ProfileChip>
          <IconButton aria-label="Menu"><MdMoreVert size={28} /></IconButton>
        </Toolbar>

        <Bookmarks>
          <BookmarkLink href="#" aria-label="Bookmark"><Pentagon /></BookmarkLink>
          {bookmarks.map((b) => (
            <BookmarkLink key={b.label} href="#" $label={b.width}>
              {b.icon}
              <span>{b.label}</span>
            </BookmarkLink>
          ))}
          <BookmarkEnd>
            <More aria-label="More bookmarks">»</More>
            <Rule />
            <BookmarkLink href="#" $label={140}>
              <FolderGlyph />
              <span>Other bookmarks</span>
            </BookmarkLink>
          </BookmarkEnd>
        </Bookmarks>
      </Chrome>

      <Viewport>
        <Page>
          <LoginBox>
            <Logo><b>Zoo</b>Management</Logo>
            <Card onSubmit={(e) => e.preventDefault()}>
              <Message>Sign in to start your session</Message>
              <Field>
                <FieldInput type="text" placeholder="Username" aria-label="Username" />
                <UserGlyph />
              </Field>
              <Field>
                <FieldInput type="password" placeholder="Password" aria-label="Password" />
                <LockGlyph />
              </Field>
              <Submit type="submit">sign in</Submit>
            </Card>
          </LoginBox>
        </Page>
        <ScrollTrack>
          <ScrollArrow aria-label="Scroll up" />
          <ScrollRail><ScrollThumb /></ScrollRail>
          <ScrollArrow $down aria-label="Scroll down" />
        </ScrollTrack>
      </Viewport>

      <Taskbar>
        <SystemButton aria-label="Start"><WindowsLogo /></SystemButton>
        <SystemButton aria-label="Task view"><TaskView /></SystemButton>
        <Apps>
          {apps.map((app) => (
            <AppButton key={app.name} aria-label={app.name} $open={app.open} $active={app.active} $stacked={app.stacked}>
              {app.icon}
            </AppButton>
          ))}
        </Apps>
        <Tray>
          <TrayButton $w={36} aria-label="Show hidden icons">
            <svg width="20" height="12" fill="none" stroke="#fff" strokeWidth="1.500"><path d="M1 11l9-9 9 9" /></svg>
          </TrayButton>
          <TrayButton $w={36} aria-label="Battery">
            <svg width="24" height="14" fill="none" stroke="#fff"><path d="M.5.5h21v12H.5zM23 4v5" /><path d="M2 2h4v9H2z" fill="#fff" stroke="none" /></svg>
          </TrayButton>
          <TrayButton $w={36} aria-label="Volume">
            <svg width="24" height="20" fill="none" stroke="#fff" strokeWidth="1.300"><path d="M1 7h3l6-5.500v17L4 13H1zM13 7.500q2 2.500 0 5M16 5q4 5 0 10M19 2q6 8 0 16" /></svg>
          </TrayButton>
          <TrayButton $w={36} aria-label="Network">
            <svg width="20" height="20" fill="none" strokeWidth="1.300">
              <path stroke="#777" d="M1 19Q1 1 19 1M6 19Q6 6 19 6" />
              <path stroke="#ddd" d="M11 19q0-8 8-8" />
              <circle cx="17" cy="17" r="2" fill="#fff" />
            </svg>
          </TrayButton>
          <TrayButton $w={56}>ENG</TrayButton>
          <Clock>
            <time>21.04</time>
            <time>01/08/2020</time>
          </Clock>
          <TrayButton $w={64} aria-label="Notifications">
            <svg width="24" height="24" fill="none" stroke="#fff" strokeWidth="1.300"><path d="M.7.7h22.600v18H16l-4.500 4.300-4.500-4.300H.7z" /></svg>
          </TrayButton>
          <ShowDesktop aria-label="Show desktop" />
        </Tray>
      </Taskbar>
    </Screen>
  );
}
